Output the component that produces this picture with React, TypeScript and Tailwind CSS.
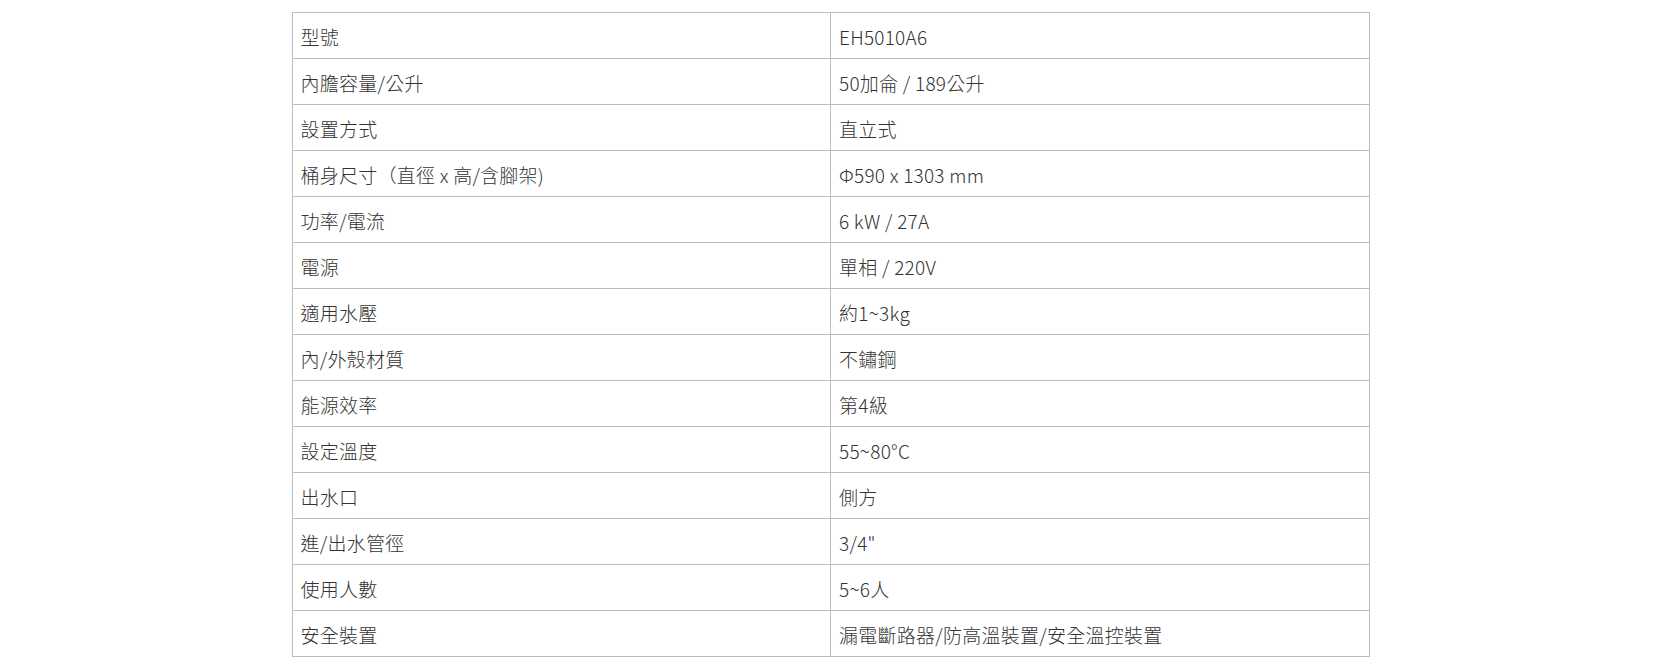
import React from "react";

const rows: [string, string][] = [
  ["型號", "EH5010A6"],
  ["內膽容量/公升", "50加侖 / 189公升"],
  ["設置方式", "直立式"],
  ["桶身尺寸（直徑 x 高/含腳架)", "Φ590 x 1303 mm"],
  ["功率/電流", "6 kW / 27A"],
  ["電源", "單相 / 220V"],
  ["適用水壓", "約1~3kg"],
  ["內/外殼材質", "不鏽鋼"],
  ["能源效率", "第4級"],
  ["設定溫度", "55~80°C"],
  ["出水口", "側方"],
  ["進/出水管徑", "3/4\""],
  ["使用人數", "5~6人"],
  ["安全裝置", "漏電斷路器/防高溫裝置/安全溫控裝置"],
];

export default function App() {
  return (
    <div className="w-full bg-white pt-3 pb-[10px]">
      <table
        className="mx-auto w-[1078px] table-fixed border-collapse text-[19px] font-light tracking-[0.25px] text-[#333]"
        style={{ fontFamily: '"Noto Sans CJK TC", "Noto Sans", sans-serif' }}
      >
        <tbody>
          {rows.map(([k, v], i) => (
            <tr key={i} className="h-[46px]">
              <td className="w-1/2 border border-[#bdbdbd] px-2 pt-[1px] align-middle leading-none">{k}</td>
              <td className="w-1/2 border border-[#bdbdbd] px-2 pt-[1px] align-middle leading-none">{v}</td>
            </tr>
          ))}
        </tbody>
      </table>
    </div>
  );
}
